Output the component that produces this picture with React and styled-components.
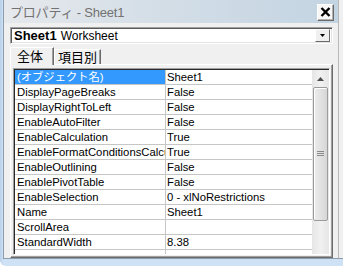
import React from 'react';
import styled, { createGlobalStyle } from 'styled-components';

const GlobalStyle = createGlobalStyle`
  html, body {
    margin: 0;
    padding: 0;
    background: #ffffff;
    overflow: hidden;
  }
`;

const Window = styled.div`
  width: 343px;
  height: 266px;
  box-sizing: border-box;
  padding: 0 0 7px 3px;
  background: linear-gradient(90deg, #b6cfe9 0px, #cfe1f4 3px);
  border-bottom-left-radius: 6px;
  display: flex;
  font-family: 'Liberation Sans', 'Noto Sans CJK JP', sans-serif;
`;

const Panel = styled.div`
  flex: 1;
  display: flex;
  background: #f0f0f0;
  border-left: 1px solid #8d9cab;
  border-bottom: 1px solid #8d9cab;
  padding-right: 4px;
`;

const Main = styled.div`
  flex: 1;
  display: flex;
  flex-direction: column;
  border-right: 1px solid #b9b9b9;
  min-width: 0;
`;

const TitleBar = styled.div`
  height: 23px;
  flex: none;
  display: flex;
  align-items: center;
  justify-content: space-between;
  padding: 0 4px 0 6px;
  background: linear-gradient(90deg, #e6e9ec 0%, #d4dee7 45%, #c3d4e2 100%);
`;

const Title = styled.span`
  font-size: 13px;
  color: #727272;
  letter-spacing: -0.2px;
`;

const CloseButton = styled.div`
  width: 15px;
  height: 15px;
  margin-top: 1px;
  background: #f7f7f7;
  border: 1px solid;
  border-color: #ffffff #6b6b6b #6b6b6b #ffffff;
  box-shadow: inset -1px -1px 0 #b0b0b0;
  display: flex;
  align-items: center;
  justify-content: center;
`;

const Body = styled.div`
  flex: 1;
  display: flex;
  flex-direction: column;
  padding: 4px 0 1px 6px;
`;

const Combo = styled.div`
  width: 323px;
  height: 17px;
  box-sizing: border-box;
  display: flex;
  align-items: center;
  background: #ffffff;
  border: 1px solid;
  border-color: #a0a0a0 #ffffff #ffffff #a0a0a0;
  box-shadow: inset 1px 1px 0 #5a5a5a, inset -1px -1px 0 #e3e3e3;
  padding: 0 2px 0 3px;
`;

const ComboText = styled.span`
  flex: 1;
  font-size: 12px;
  color: #000;
  white-space: nowrap;

  b {
    font-weight: bold;
    font-size: 13px;
    margin-right: 4px;
  }
`;

const ComboArrow = styled.div`
  width: 15px;
  height: 13px;
  box-sizing: border-box;
  background: #f0f0f0;
  border: 1px solid;
  border-color: #ffffff #6b6b6b #6b6b6b #ffffff;
  display: flex;
  align-items: center;
  justify-content: center;
`;

const TabStrip = styled.div`
  display: flex;
  align-items: flex-end;
  height: 17px;
  margin-top: 3px;
`;

const Tab = styled.div`
  height: ${p => (p.$active ? 18 : 15)}px;
  box-sizing: border-box;
  padding: ${p => (p.$active ? '0 10px 0 6px' : '0 3px 0 3px')};
  display: flex;
  align-items: center;
  font-size: 13px;
  line-height: 1;
  color: #000;
  background: #f0f0f0;
  border: 1px solid;
  border-bottom: none;
  border-color: #ffffff #6b6b6b #6b6b6b #ffffff;
  box-shadow: inset -1px 0 0 #a0a0a0;
  position: relative;
  z-index: ${p => (p.$active ? 1 : 0)};
  margin-bottom: ${p => (p.$active ? '-1px' : '0')};
`;

const TabPage = styled.div`
  width: 323px;
  height: 194px;
  box-sizing: border-box;
  border: 1px solid;
  border-color: #ffffff #6b6b6b #6b6b6b #ffffff;
  box-shadow: inset -1px -1px 0 #a0a0a0;
  padding: 3px 2px 2px 2px;
  display: flex;
`;

const GridBox = styled.div`
  flex: 1;
  display: flex;
  border: 1px solid;
  border-color: #a0a0a0 #ffffff #ffffff #a0a0a0;
  box-shadow: inset 1px 1px 0 #2b2b2b;
  padding: 1px 0 0 1px;
  background: #ffffff;
  overflow: hidden;
`;

const Rows = styled.div`
  flex: 1;
  display: flex;
  flex-direction: column;
  overflow: hidden;
`;

const Row = styled.div`
  display: flex;
  height: 15px;
  flex: none;
  box-sizing: border-box;
  border-bottom: 1px solid #c6c6c6;
`;

const NameCell = styled.div`
  width: 151px;
  flex: none;
  box-sizing: border-box;
  border-right: 1px solid #c6c6c6;
  padding-left: 2px;
  font-size: 11.3px;
  line-height: 14px;
  white-space: nowrap;
  overflow: hidden;
  text-overflow: clip;
  color: ${p => (p.$selected ? '#ffffff' : '#000000')};
  background: ${p => (p.$selected ? '#3399ff' : 'transparent')};
`;

const ValueCell = styled.div`
  flex: 1;
  padding-left: 1px;
  font-size: 11.3px;
  line-height: 14px;
  white-space: nowrap;
  overflow: hidden;
  color: #000;
`;

const Filler = styled.div`
  flex: 1;
  display: flex;
`;

const FillerName = styled.div`
  width: 151px;
  box-sizing: border-box;
  border-right: 1px solid #c6c6c6;
`;

const ScrollBar = styled.div`
  width: 17px;
  flex: none;
  display: flex;
  flex-direction: column;
  background: linear-gradient(90deg, #e6e6e6, #f1f1f1 50%, #e6e6e6);
`;

const ScrollButton = styled.div`
  height: 17px;
  flex: none;
  display: flex;
  align-items: center;
  justify-content: center;
`;

const Track = styled.div`
  flex: 1;
  display: flex;
  flex-direction: column;
  padding: 0 1px 27px 1px;
`;

const Thumb = styled.div`
  height: 134px;
  box-sizing: border-box;
  border: 1px solid #9b9b9b;
  border-radius: 2px;
  background: linear-gradient(90deg, #ececec, #e2e2e2 50%, #d6d6d6);
  box-shadow: inset 1px 1px 0 #ffffff;
  display: flex;
  align-items: center;
  justify-content: center;
`;

const Arrow = ({ dir }) => (
  <svg width="7" height="4" viewBox="0 0 7 4">
    {dir === 'up'
      ? <polygon points="0,4 7,4 3.5,0" fill="#4d4d4d" />
      : <polygon points="0,0 7,0 3.5,4" fill="#4d4d4d" />}
  </svg>
);

const props = [
  ['(オブジェクト名)', 'Sheet1'],
  ['DisplayPageBreaks', 'False'],
  ['DisplayRightToLeft', 'False'],
  ['EnableAutoFilter', 'False'],
  ['EnableCalculation', 'True'],
  ['EnableFormatConditionsCalcu', 'True'],
  ['EnableOutlining', 'False'],
  ['EnablePivotTable', 'False'],
  ['EnableSelection', '0 - xlNoRestrictions'],
  ['Name', 'Sheet1'],
  ['ScrollArea', ''],
  ['StandardWidth', '8.38'],
];

export default function App() {
  return (
    <>
      <GlobalStyle />
      <Window>
        <Panel>
          <Main>
            <TitleBar>
              <Title>プロパティ - Sheet1</Title>
              <CloseButton>
                <svg width="11" height="10" viewBox="0 0 11 10">
                  <path d="M1.5 1 L9.5 9 M9.5 1 L1.5 9" stroke="#000" strokeWidth="2.4" />
                </svg>
              </CloseButton>
            </TitleBar>
            <Body>
              <Combo>
                <ComboText><b>Sheet1</b>Worksheet</ComboText>
                <ComboArrow>
                  <svg width="5" height="3" viewBox="0 0 5 3">
                    <polygon points="0,0 5,0 2.5,3" fill="#000" />
                  </svg>
                </ComboArrow>
              </Combo>
              <TabStrip>
                <Tab $active>全体</Tab>
                <Tab>項目別</Tab>
              </TabStrip>
              <TabPage>
                <GridBox>
                  <Rows>
                    {props.map(([name, value], i) => (
                      <Row key={name}>
                        <NameCell $selected={i === 0}>{name}</NameCell>
                        <ValueCell>{value}</ValueCell>
                      </Row>
                    ))}
                    <Filler><FillerName /></Filler>
                  </Rows>
                  <ScrollBar>
                    <ScrollButton><Arrow dir="up" /></ScrollButton>
                    <Track>
                      <Thumb>
                        <svg width="7" height="6" viewBox="0 0 7 6">
                          <path d="M0 0.5 H7 M0 2.5 H7 M0 4.5 H7" stroke="#8a8a8a" strokeWidth="1" />
                        </svg>
                      </Thumb>
                    </Track>
                    <ScrollButton><Arrow dir="down" /></ScrollButton>
                  </ScrollBar>
                </GridBox>
              </TabPage>
            </Body>
          </Main>
        </Panel>
      </Window>
    </>
  );
}
